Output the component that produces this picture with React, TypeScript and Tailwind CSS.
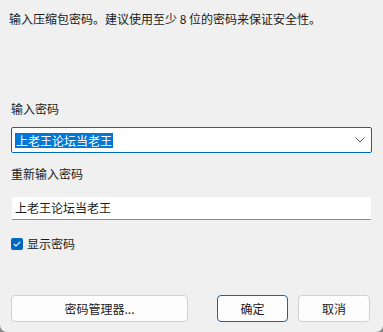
import { useState } from "react";

const font = { fontFamily: '"Microsoft YaHei UI", "Noto Sans CJK SC", "Noto Sans", sans-serif' };

function Chevron() {
  return (
    <svg width="10" height="6" viewBox="0 0 10 6" fill="none">
      <path d="M0.5 0.5 L5 5 L9.5 0.5" stroke="#5f5f5f" strokeWidth="1" />
    </svg>
  );
}

export default function App() {
  const [show, setShow] = useState(true);
  const pwd = "上老王论坛当老王";

  return (
    <div className="w-[383px] h-[332px] bg-[#8a8a8a]" style={font}>
      <div className="w-full h-full bg-[#f0f0f0] rounded-b-[7px] flex flex-col text-[12px] leading-[16px] text-[#1a1a1a]">
        <p className="mt-[11px] ml-[9px]">输入压缩包密码。建议使用至少 8 位的密码来保证安全性。</p>

        <label className="mt-[74px] ml-[11px]">输入密码</label>
        <div className="mt-[10px] mx-[11px] h-[26px] bg-white border border-[#0067c0] rounded-[2px] flex items-center pl-[3px] pr-[6px] text-[12px]">
          <span className="bg-[#0078d7] text-white text-[12px] leading-[15px] px-[1px]">{pwd}</span>
          <span className="flex-1" />
          <Chevron />
        </div>

        <label className="mt-[13px] ml-[11px]">重新输入密码</label>
        <div className="mt-[15px] mx-[12px] h-[23px] bg-white border-b border-b-[#8d8d8d] flex items-center pl-[3px] text-[12px]">
          <span>{pwd}</span>
        </div>

        <label className="mt-[16px] ml-[11px] flex items-center gap-[4px] cursor-default" onClick={() => setShow(!show)}>
          <span className={`w-[12px] h-[12px] rounded-[2px] flex items-center justify-center ${show ? "bg-[#0067c0]" : "bg-white border border-[#8d8d8d]"}`}>
            {show && (
              <svg width="8" height="6" viewBox="0 0 8 6" fill="none">
                <path d="M0.8 3 L3 5 L7.2 0.8" stroke="white" strokeWidth="1.1" />
              </svg>
            )}
          </span>
          <span>显示密码</span>
        </label>

        <div className="mt-[43px] mx-[11px] flex text-[12px]">
          <button className="w-[177px] h-[27px] bg-[#fdfdfd] border border-[#d0d0d0] rounded-[4px]">密码管理器...</button>
          <span className="flex-1" />
          <button className="w-[71px] h-[27px] bg-[#fdfdfd] border border-[#2e5f90] rounded-[4px]">确定</button>
          <button className="ml-[10px] w-[72px] h-[27px] bg-[#fdfdfd] border border-[#d0d0d0] rounded-[4px] mr-[2px]">取消</button>
        </div>
      </div>
    </div>
  );
}
